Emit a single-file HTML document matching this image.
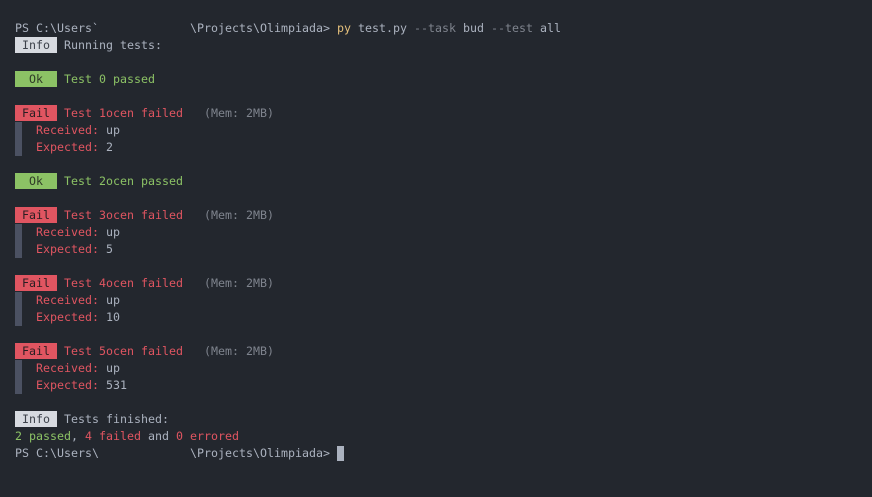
<!DOCTYPE html>
<html><head><style>
html,body{margin:0;padding:0;background:#23272e;}
body{width:872px;height:497px;overflow:hidden;}
pre{margin:0;position:absolute;left:15px;top:20px;font-family:"DejaVu Sans Mono","Liberation Mono",monospace;font-size:11.63px;line-height:17px;color:#abb2bf;}
.l{height:17px;white-space:pre;}
.b{display:inline-block;height:16px;vertical-align:top;}
.info{background:#d7dae0;color:#3d424b;}
.ok{background:#8cc265;color:#2f3a27;}
.fail{background:#e05561;color:#2a1e22;}
.g{color:#8cc265}.r{color:#e05561}.m{color:#7f848e}.y{color:#e5c07b}
.bar{display:inline-block;width:7px;height:17px;background:#4b5162;vertical-align:top;}
.cur{display:inline-block;width:7px;height:15px;background:#abb2bf;vertical-align:top;margin-top:1px;}
</style></head><body><pre><div class="l">PS C:\Users`             \Projects\Olimpiada> <span class="y">py</span> test.py <span class="m">--task</span> bud <span class="m">--test</span> all</div><div class="l"><span class="b info"> Info </span> Running tests:</div><div class="l"> </div><div class="l"><span class="b ok">  Ok  </span> <span class="g">Test 0 passed</span></div><div class="l"> </div><div class="l"><span class="b fail"> Fail </span> <span class="r">Test 1ocen failed</span>   <span class="m">(Mem: 2MB)</span></div><div class="l"><span class="bar"></span>  <span class="r">Received:</span> up</div><div class="l"><span class="bar"></span>  <span class="r">Expected:</span> 2</div><div class="l"> </div><div class="l"><span class="b ok">  Ok  </span> <span class="g">Test 2ocen passed</span></div><div class="l"> </div><div class="l"><span class="b fail"> Fail </span> <span class="r">Test 3ocen failed</span>   <span class="m">(Mem: 2MB)</span></div><div class="l"><span class="bar"></span>  <span class="r">Received:</span> up</div><div class="l"><span class="bar"></span>  <span class="r">Expected:</span> 5</div><div class="l"> </div><div class="l"><span class="b fail"> Fail </span> <span class="r">Test 4ocen failed</span>   <span class="m">(Mem: 2MB)</span></div><div class="l"><span class="bar"></span>  <span class="r">Received:</span> up</div><div class="l"><span class="bar"></span>  <span class="r">Expected:</span> 10</div><div class="l"> </div><div class="l"><span class="b fail"> Fail </span> <span class="r">Test 5ocen failed</span>   <span class="m">(Mem: 2MB)</span></div><div class="l"><span class="bar"></span>  <span class="r">Received:</span> up</div><div class="l"><span class="bar"></span>  <span class="r">Expected:</span> 531</div><div class="l"> </div><div class="l"><span class="b info"> Info </span> Tests finished:</div><div class="l"><span class="g">2 passed</span>, <span class="r">4 failed</span> and <span class="r">0 errored</span></div><div class="l">PS C:\Users\             \Projects\Olimpiada> <span class="cur"></span></div></pre></body></html>
